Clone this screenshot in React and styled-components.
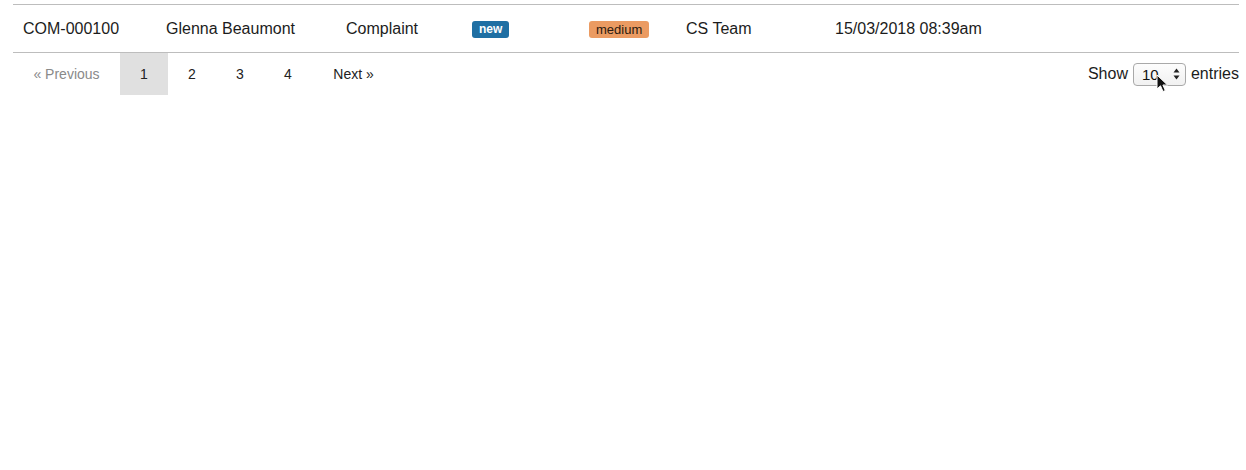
import React from "react";
import styled, { createGlobalStyle } from "styled-components";

const GlobalStyle = createGlobalStyle`
  html, body {
    margin: 0;
    padding: 0;
    background: #fff;
    font-family: "Liberation Sans", Arial, Helvetica, sans-serif;
    color: #222;
  }
`;

const Page = styled.div`
  padding: 4px 7px 0 13px;
`;

const Table = styled.table`
  width: 100%;
  border-collapse: collapse;
  border-top: 1px solid #bdbdbd;
  border-bottom: 1px solid #bdbdbd;
`;

const Cell = styled.td`
  width: ${(props) => (props.width ? props.width : "auto")};
  height: 48px;
  padding: 1px 0 0 10px;
  box-sizing: border-box;
  font-size: 16px;
  color: #1c1c1c;
  vertical-align: middle;
  white-space: nowrap;
`;

const Badge = styled.span`
  display: inline-block;
  height: 17px;
  line-height: 17px;
  padding: 0 ${(props) => (props.pad ? props.pad : "6px")};
  border-radius: 3px;
  font-size: ${(props) => (props.size ? props.size : "12px")};
  font-weight: ${(props) => (props.bold ? "700" : "400")};
  background: ${(props) => props.bg};
  color: ${(props) => props.color};
  vertical-align: middle;
`;

const Footer = styled.div`
  display: flex;
  justify-content: space-between;
  align-items: center;
`;

const Pager = styled.ul`
  display: flex;
  margin: 0;
  padding: 0;
  list-style: none;
`;

const PageItem = styled.li`
  height: 42px;
  width: ${(props) => (props.width ? props.width : "48px")};
  display: flex;
  align-items: center;
  justify-content: center;
  font-size: 14px;
  color: ${(props) => (props.muted ? "#8a8a8a" : "#222")};
  background: ${(props) => (props.active ? "#e0e0e0" : "transparent")};
  box-sizing: border-box;
`;

const Length = styled.div`
  display: flex;
  align-items: center;
  gap: 5px;
  font-size: 16px;
  color: #1c1c1c;
  position: relative;
`;

const SelectBox = styled.div`
  width: 53px;
  height: 23px;
  box-sizing: border-box;
  border: 1px solid #a9a9a9;
  border-radius: 4px;
  background: linear-gradient(#fdfdfd, #f1f1f1);
  display: flex;
  align-items: center;
  justify-content: space-between;
  padding: 0 5px 0 8px;
  font-size: 15px;
  color: #111;
`;

const Cursor = styled.svg`
  position: absolute;
  left: 68px;
  top: 11px;
`;

const rows = [
  { id: "COM-000100", name: "Glenna Beaumont", type: "Complaint", team: "CS Team", date: "15/03/2018 08:39am" },
];

const App = () => {
  return (
    <Page>
      <GlobalStyle />
      <Table>
        <tbody>
          {rows.map((r) => (
            <tr key={r.id}>
              <Cell width="143px">{r.id}</Cell>
              <Cell width="180px">{r.name}</Cell>
              <Cell width="126px">{r.type}</Cell>
              <Cell width="117px">
                <Badge bg="#1f6fa3" color="#fff" bold pad="7px">new</Badge>
              </Cell>
              <Cell width="97px">
                <Badge bg="#eb9b62" color="#2a1a10" size="13px" pad="7px">medium</Badge>
              </Cell>
              <Cell width="149px">{r.team}</Cell>
              <Cell>{r.date}</Cell>
            </tr>
          ))}
        </tbody>
      </Table>
      <Footer>
        <Pager>
          <PageItem muted width="107px">« Previous</PageItem>
          <PageItem active>1</PageItem>
          <PageItem>2</PageItem>
          <PageItem>3</PageItem>
          <PageItem>4</PageItem>
          <PageItem width="83px">Next »</PageItem>
        </Pager>
        <Length>
          Show
          <SelectBox>
            <span>10</span>
            <svg width="7" height="12" viewBox="0 0 7 12">
              <path d="M3.5 0.5 L6.5 4.5 L0.5 4.5 Z" fill="#222" />
              <path d="M3.5 11.5 L6.5 7.5 L0.5 7.5 Z" fill="#222" />
            </svg>
          </SelectBox>
          entries
          <Cursor width="14" height="20" viewBox="0 0 14 20">
            <path
              d="M1 1 L1 15 L4.5 11.8 L7 17.5 L9.3 16.5 L6.9 11 L11.5 11 Z"
              fill="#111"
              stroke="#fff"
              strokeWidth="1"
              strokeLinejoin="round"
            />
          </Cursor>
        </Length>
      </Footer>
    </Page>
  );
};

export default App;
